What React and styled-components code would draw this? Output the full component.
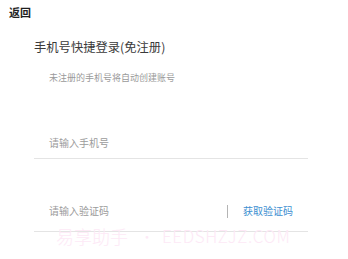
import styled, { createGlobalStyle } from 'styled-components';

const GlobalStyle = createGlobalStyle`
  body {
    margin: 0;
    background: #ffffff;
    font-family: "Noto Sans CJK SC", "Noto Sans", sans-serif;
  }
`;

const LoginLabel = {
  back: '返回',
  title: '手机号快捷登录(免注册)',
  subtitle: '未注册的手机号将自动创建账号',
  phone: '请输入手机号',
  code: '请输入验证码',
  getCode: '获取验证码',
  watermarkName: '易享助手',
  watermarkSite: 'EEDSHZJZ.COM',
};

const App = () => {
  return (
    <S.Page>
      <GlobalStyle />
      <S.Header>
        <S.Back>{LoginLabel.back}</S.Back>
      </S.Header>
      <S.Form>
        <S.Title>{LoginLabel.title}</S.Title>
        <S.Subtitle>{LoginLabel.subtitle}</S.Subtitle>
        <S.Row $height={32} $top={43}>
          <S.Placeholder>{LoginLabel.phone}</S.Placeholder>
        </S.Row>
        <S.Row $height={41} $top={32}>
          <S.Placeholder>{LoginLabel.code}</S.Placeholder>
          <S.Divider />
          <S.CodeButton>{LoginLabel.getCode}</S.CodeButton>
        </S.Row>
      </S.Form>
      <S.Watermark>
        <span>{LoginLabel.watermarkName}</span>
        <S.Dot>•</S.Dot>
        <S.Site>{LoginLabel.watermarkSite}</S.Site>
      </S.Watermark>
    </S.Page>
  );
};

export default App;

const S = {
  Page: styled.div`
    position: relative;
    width: 348px;
    height: 259px;
    overflow: hidden;
    background: #ffffff;
  `,
  Header: styled.div`
    padding: 5px 9px 0;
  `,
  Back: styled.div`
    font-size: 11px;
    line-height: 14px;
    font-weight: 700;
    color: #1f1f1f;
  `,
  Form: styled.div`
    display: flex;
    flex-direction: column;
    padding: 0 40px 0 34px;
  `,
  Title: styled.div`
    margin-top: 20px;
    font-size: 12.3px;
    line-height: 16px;
    color: #3a3a3a;
  `,
  Subtitle: styled.div`
    margin-top: 17px;
    padding-left: 15px;
    font-size: 9px;
    line-height: 12px;
    color: #9a9a9a;
  `,
  Row: styled.div`
    box-sizing: border-box;
    display: flex;
    align-items: center;
    height: ${(props) => props.$height}px;
    margin-top: ${(props) => props.$top}px;
    padding: 0 15px;
    border-bottom: 1px solid #e4e4e4;
  `,
  Placeholder: styled.div`
    flex: 1;
    font-size: 10px;
    line-height: 14px;
    color: #9b9b9b;
  `,
  Divider: styled.div`
    width: 1px;
    height: 13px;
    margin-right: 15px;
    background: #b4b4b4;
  `,
  CodeButton: styled.div`
    font-size: 10px;
    line-height: 14px;
    color: #3d8fd1;
  `,
  Watermark: styled.div`
    position: absolute;
    left: 56px;
    top: 226px;
    display: flex;
    align-items: center;
    font-size: 18px;
    line-height: 20px;
    font-weight: 300;
    color: #fde9f6;
    white-space: nowrap;
    pointer-events: none;
  `,
  Dot: styled.span`
    margin: 0 8px 0 12px;
    font-size: 14px;
  `,
  Site: styled.span`
    font-size: 17px;
    letter-spacing: 0.6px;
  `,
};
